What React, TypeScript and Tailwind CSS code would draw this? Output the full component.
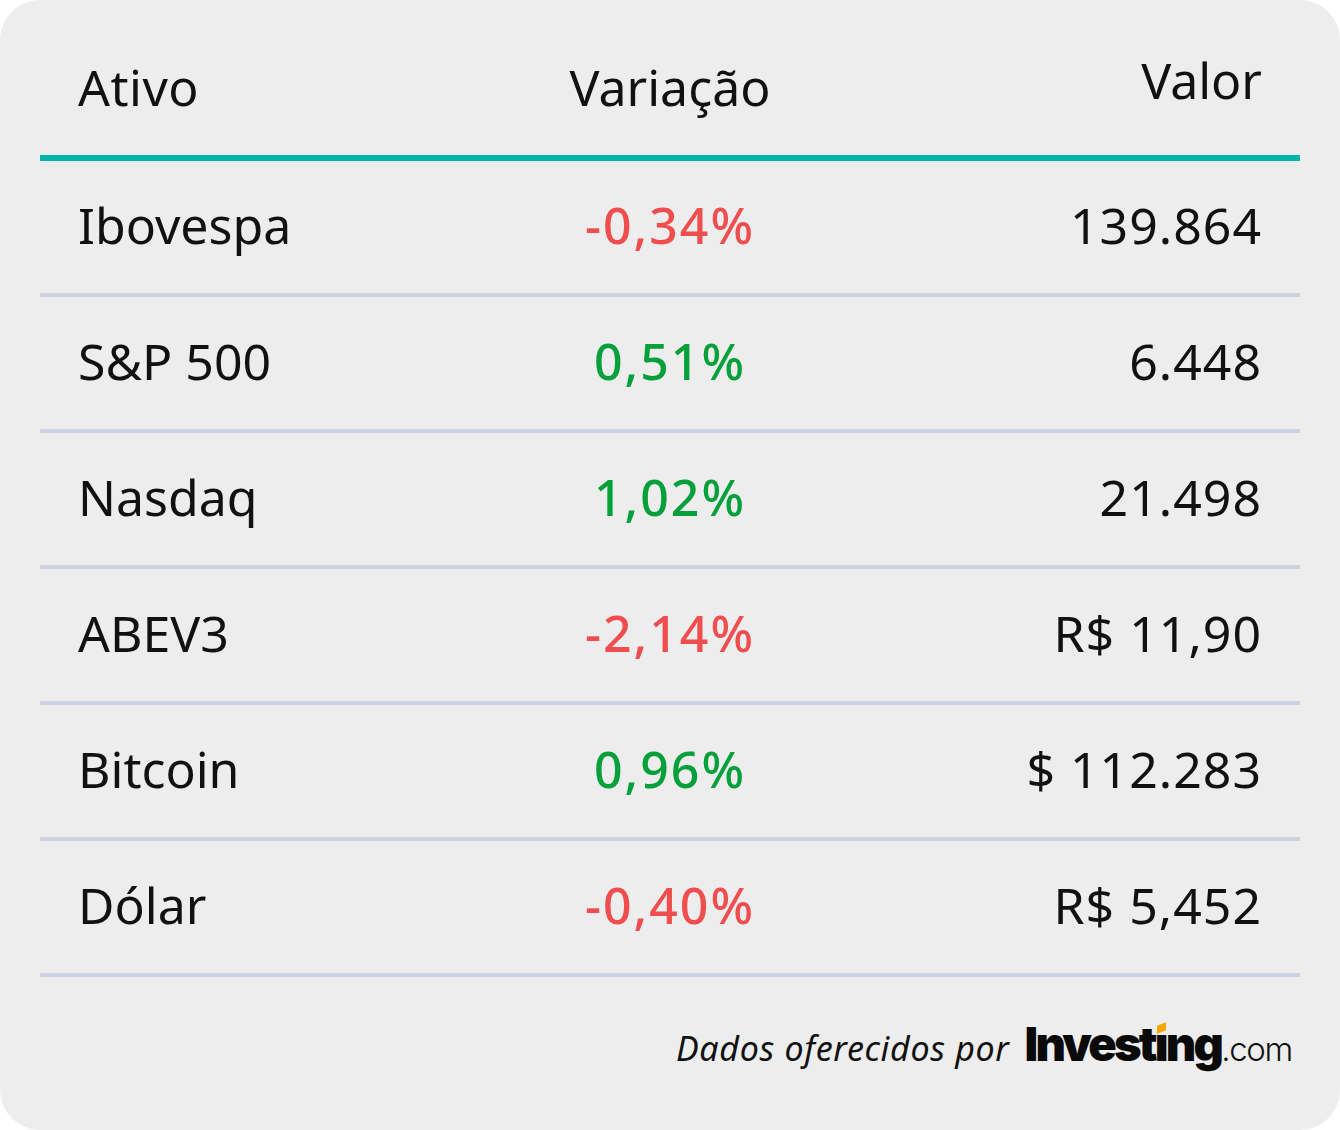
import React from "react";

type Row = {
  name: string;
  change: string;
  value: string;
  up: boolean;
};

const rows: Row[] = [
  { name: "Ibovespa", change: "-0,34%", value: "139.864", up: false },
  { name: "S&P 500", change: "0,51%", value: "6.448", up: true },
  { name: "Nasdaq", change: "1,02%", value: "21.498", up: true },
  { name: "ABEV3", change: "-2,14%", value: "R$ 11,90", up: false },
  { name: "Bitcoin", change: "0,96%", value: "$ 112.283", up: true },
  { name: "Dólar", change: "-0,40%", value: "R$ 5,452", up: false },
];

function InvestingLogo() {
  return (
    <div className="flex items-baseline">
      <span className="font-['Inter',sans-serif] font-black text-[47px] leading-none tracking-[-0.06em] text-[#0a0a0a]">
        Invest
        <span className="relative inline-block">
          ı
          {/* ponto laranja do "i" */}
          <span className="absolute left-[2px] top-[4px] w-[9px] h-[8px] bg-[#f7a500] skew-y-[-20deg]" />
        </span>
        ng
      </span>
      <span className="font-['Inter',sans-serif] font-light text-[33px] leading-none tracking-[-0.04em] text-[#111]">
        .com
      </span>
    </div>
  );
}

export default function App() {
  return (
    <div className="min-h-screen bg-white">
      <div className="w-[1340px] h-[1130px] bg-[#ededed] rounded-[40px] px-10 flex flex-col font-['Noto_Sans',sans-serif] text-[#111111]">
        {/* cabeçalho */}
        <div className="grid grid-cols-3 items-center h-[161px] pt-[19px] border-b-[6px] border-[#00b5ad] text-[50px] leading-none">
          <div className="pl-[38px] tracking-[0.01em]">Ativo</div>
          <div className="text-center">Variação</div>
          <div className="text-right pr-[38px] pb-[14px]">Valor</div>
        </div>

        {/* linhas */}
        {rows.map((row) => (
          <div
            key={row.name}
            className="grid grid-cols-3 items-center h-[136px] pb-[4px] border-b-4 border-[#cbd3e0] text-[50px] leading-none"
          >
            <div className="pl-[38px]">{row.name}</div>
            <div
              className={
                row.up
                  ? "text-center font-medium tracking-[0.04em] text-[#06a03a]"
                  : "text-center font-medium tracking-[0.04em] text-[#f04e4e]"
              }
            >
              {row.change}
            </div>
            <div className="text-right pr-[38px] tracking-[0.02em]">{row.value}</div>
          </div>
        ))}

        {/* rodapé */}
        <div className="flex justify-end items-baseline gap-[15px] pt-[43px] pr-[8px]">
          <span className="italic text-[34px] leading-none tracking-[0.02em] text-[#111]">
            Dados oferecidos por
          </span>
          <InvestingLogo />
        </div>
      </div>
    </div>
  );
}
